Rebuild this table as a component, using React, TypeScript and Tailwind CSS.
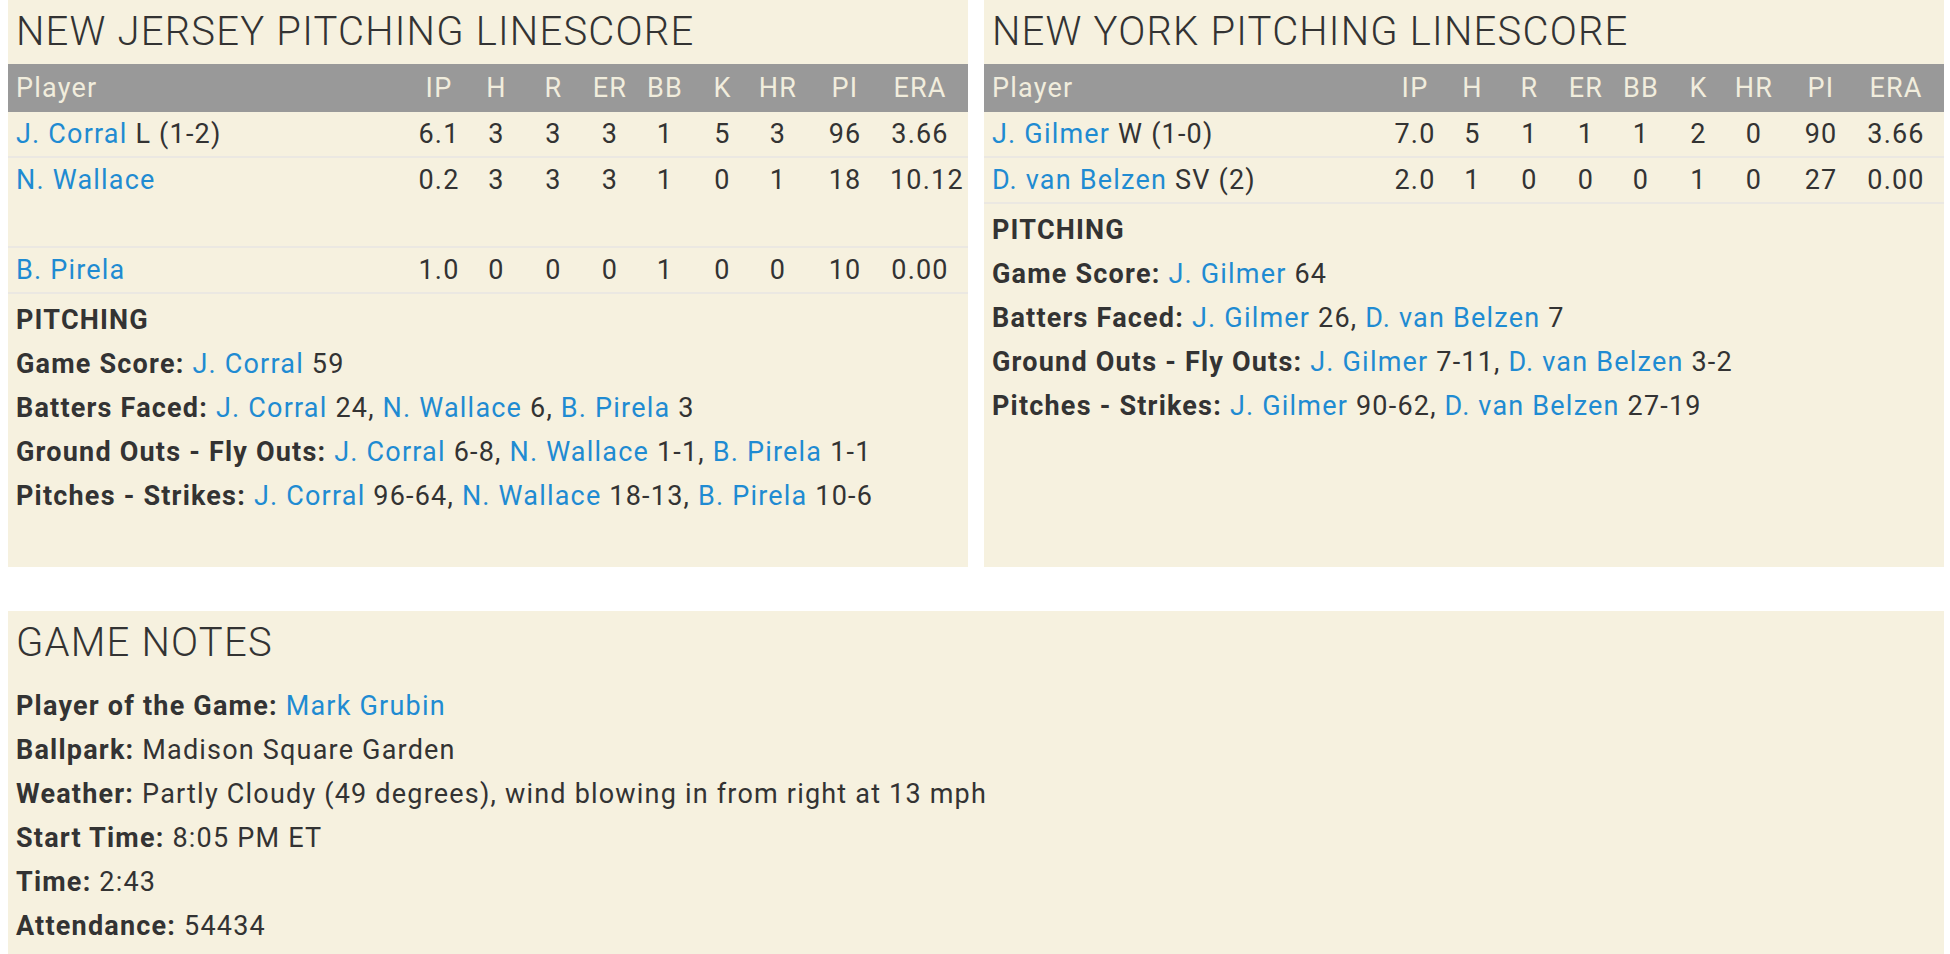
import React from "react";

type Part = { t: string; link?: boolean };

const COLS = "grid grid-cols-[1fr_58px_57px_57px_56px_54px_61px_50px_84px_66px] pr-[15px]";
const HEADS = ["IP", "H", "R", "ER", "BB", "K", "HR", "PI", "ERA"];

function L({ children }: { children: React.ReactNode }) {
  return <span className="text-[#1f8bd2]">{children}</span>;
}

function Title({ children, mb }: { children: React.ReactNode; mb: string }) {
  return (
    <div className={`pl-2 pt-2 text-[40px] leading-[48px] font-light text-[#333333] ${mb}`}>{children}</div>
  );
}

type Row = { name: string; note?: string; stats: string[]; tall?: boolean };

function Table({ rows }: { rows: Row[] }) {
  return (
    <div>
      <div className={`${COLS} h-12 items-center bg-[#999999] text-[#f1eddd]`}>
        <div className="pl-2">Player</div>
        {HEADS.map((h) => (
          <div key={h} className="text-center px-[3px]">
            {h}
          </div>
        ))}
      </div>
      {rows.map((r) => (
        <div
          key={r.name}
          className={`${COLS} ${r.tall ? "h-[90px]" : "h-[46px]"} items-start border-b-2 border-[#ebe8e2]`}
        >
          <div className="pl-2 h-[44px] flex items-center whitespace-nowrap">
            <L>{r.name}</L>
            {r.note ? <span>&nbsp;{r.note}</span> : null}
          </div>
          {r.stats.map((s, i) => (
            <div key={i} className="h-[44px] flex items-center px-[3px]">
              <div className="w-full text-center whitespace-nowrap">{s}</div>
            </div>
          ))}
        </div>
      ))}
    </div>
  );
}

function Line({ label, parts }: { label: string; parts: Part[] }) {
  return (
    <div className="whitespace-nowrap">
      <span className="font-bold">{label}</span>{" "}
      {parts.map((p, i) => (p.link ? <L key={i}>{p.t}</L> : <span key={i}>{p.t}</span>))}
    </div>
  );
}

export default function App() {
  return (
    <div className="w-[1950px] h-[954px] overflow-hidden bg-white font-['Roboto','Liberation_Sans',sans-serif] text-[27px] tracking-[1.2px] text-[#333333]">
      <div className="pl-2 pr-[6px]">
        <div className="flex gap-4 items-stretch">
          <div className="w-[960px] bg-[#f6f1df] pb-[49px]">
            <Title mb="mb-2">NEW JERSEY PITCHING LINESCORE</Title>
            <Table
              rows={[
                { name: "J. Corral", note: "L (1-2)", stats: ["6.1", "3", "3", "3", "1", "5", "3", "96", "3.66"] },
                { name: "N. Wallace", stats: ["0.2", "3", "3", "3", "1", "0", "1", "18", "10.12"], tall: true },
                { name: "B. Pirela", stats: ["1.0", "0", "0", "0", "1", "0", "0", "10", "0.00"] },
              ]}
            />
            <div className="pl-2 mt-1 leading-[44px]">
              <div className="font-bold">PITCHING</div>
              <Line label="Game Score:" parts={[{ t: "J. Corral", link: true }, { t: " 59" }]} />
              <Line
                label="Batters Faced:"
                parts={[
                  { t: "J. Corral", link: true },
                  { t: " 24, " },
                  { t: "N. Wallace", link: true },
                  { t: " 6, " },
                  { t: "B. Pirela", link: true },
                  { t: " 3" },
                ]}
              />
              <Line
                label="Ground Outs - Fly Outs:"
                parts={[
                  { t: "J. Corral", link: true },
                  { t: " 6-8, " },
                  { t: "N. Wallace", link: true },
                  { t: " 1-1, " },
                  { t: "B. Pirela", link: true },
                  { t: " 1-1" },
                ]}
              />
              <Line
                label="Pitches - Strikes:"
                parts={[
                  { t: "J. Corral", link: true },
                  { t: " 96-64, " },
                  { t: "N. Wallace", link: true },
                  { t: " 18-13, " },
                  { t: "B. Pirela", link: true },
                  { t: " 10-6" },
                ]}
              />
            </div>
          </div>
          <div className="w-[960px] bg-[#f6f1df]">
            <Title mb="mb-2">NEW YORK PITCHING LINESCORE</Title>
            <Table
              rows={[
                { name: "J. Gilmer", note: "W (1-0)", stats: ["7.0", "5", "1", "1", "1", "2", "0", "90", "3.66"] },
                { name: "D. van Belzen", note: "SV (2)", stats: ["2.0", "1", "0", "0", "0", "1", "0", "27", "0.00"] },
              ]}
            />
            <div className="pl-2 mt-1 leading-[44px]">
              <div className="font-bold">PITCHING</div>
              <Line label="Game Score:" parts={[{ t: "J. Gilmer", link: true }, { t: " 64" }]} />
              <Line
                label="Batters Faced:"
                parts={[
                  { t: "J. Gilmer", link: true },
                  { t: " 26, " },
                  { t: "D. van Belzen", link: true },
                  { t: " 7" },
                ]}
              />
              <Line
                label="Ground Outs - Fly Outs:"
                parts={[
                  { t: "J. Gilmer", link: true },
                  { t: " 7-11, " },
                  { t: "D. van Belzen", link: true },
                  { t: " 3-2" },
                ]}
              />
              <Line
                label="Pitches - Strikes:"
                parts={[
                  { t: "J. Gilmer", link: true },
                  { t: " 90-62, " },
                  { t: "D. van Belzen", link: true },
                  { t: " 27-19" },
                ]}
              />
            </div>
          </div>
        </div>
        <div className="mt-[44px] bg-[#f6f1df] pb-2">
          <Title mb="mb-[17px]">GAME NOTES</Title>
          <div className="pl-2 leading-[44px]">
            <Line label="Player of the Game:" parts={[{ t: "Mark Grubin", link: true }]} />
            <Line label="Ballpark:" parts={[{ t: "Madison Square Garden" }]} />
            <Line label="Weather:" parts={[{ t: "Partly Cloudy (49 degrees), wind blowing in from right at 13 mph" }]} />
            <Line label="Start Time:" parts={[{ t: "8:05 PM ET" }]} />
            <Line label="Time:" parts={[{ t: "2:43" }]} />
            <Line label="Attendance:" parts={[{ t: "54434" }]} />
          </div>
        </div>
      </div>
    </div>
  );
}
